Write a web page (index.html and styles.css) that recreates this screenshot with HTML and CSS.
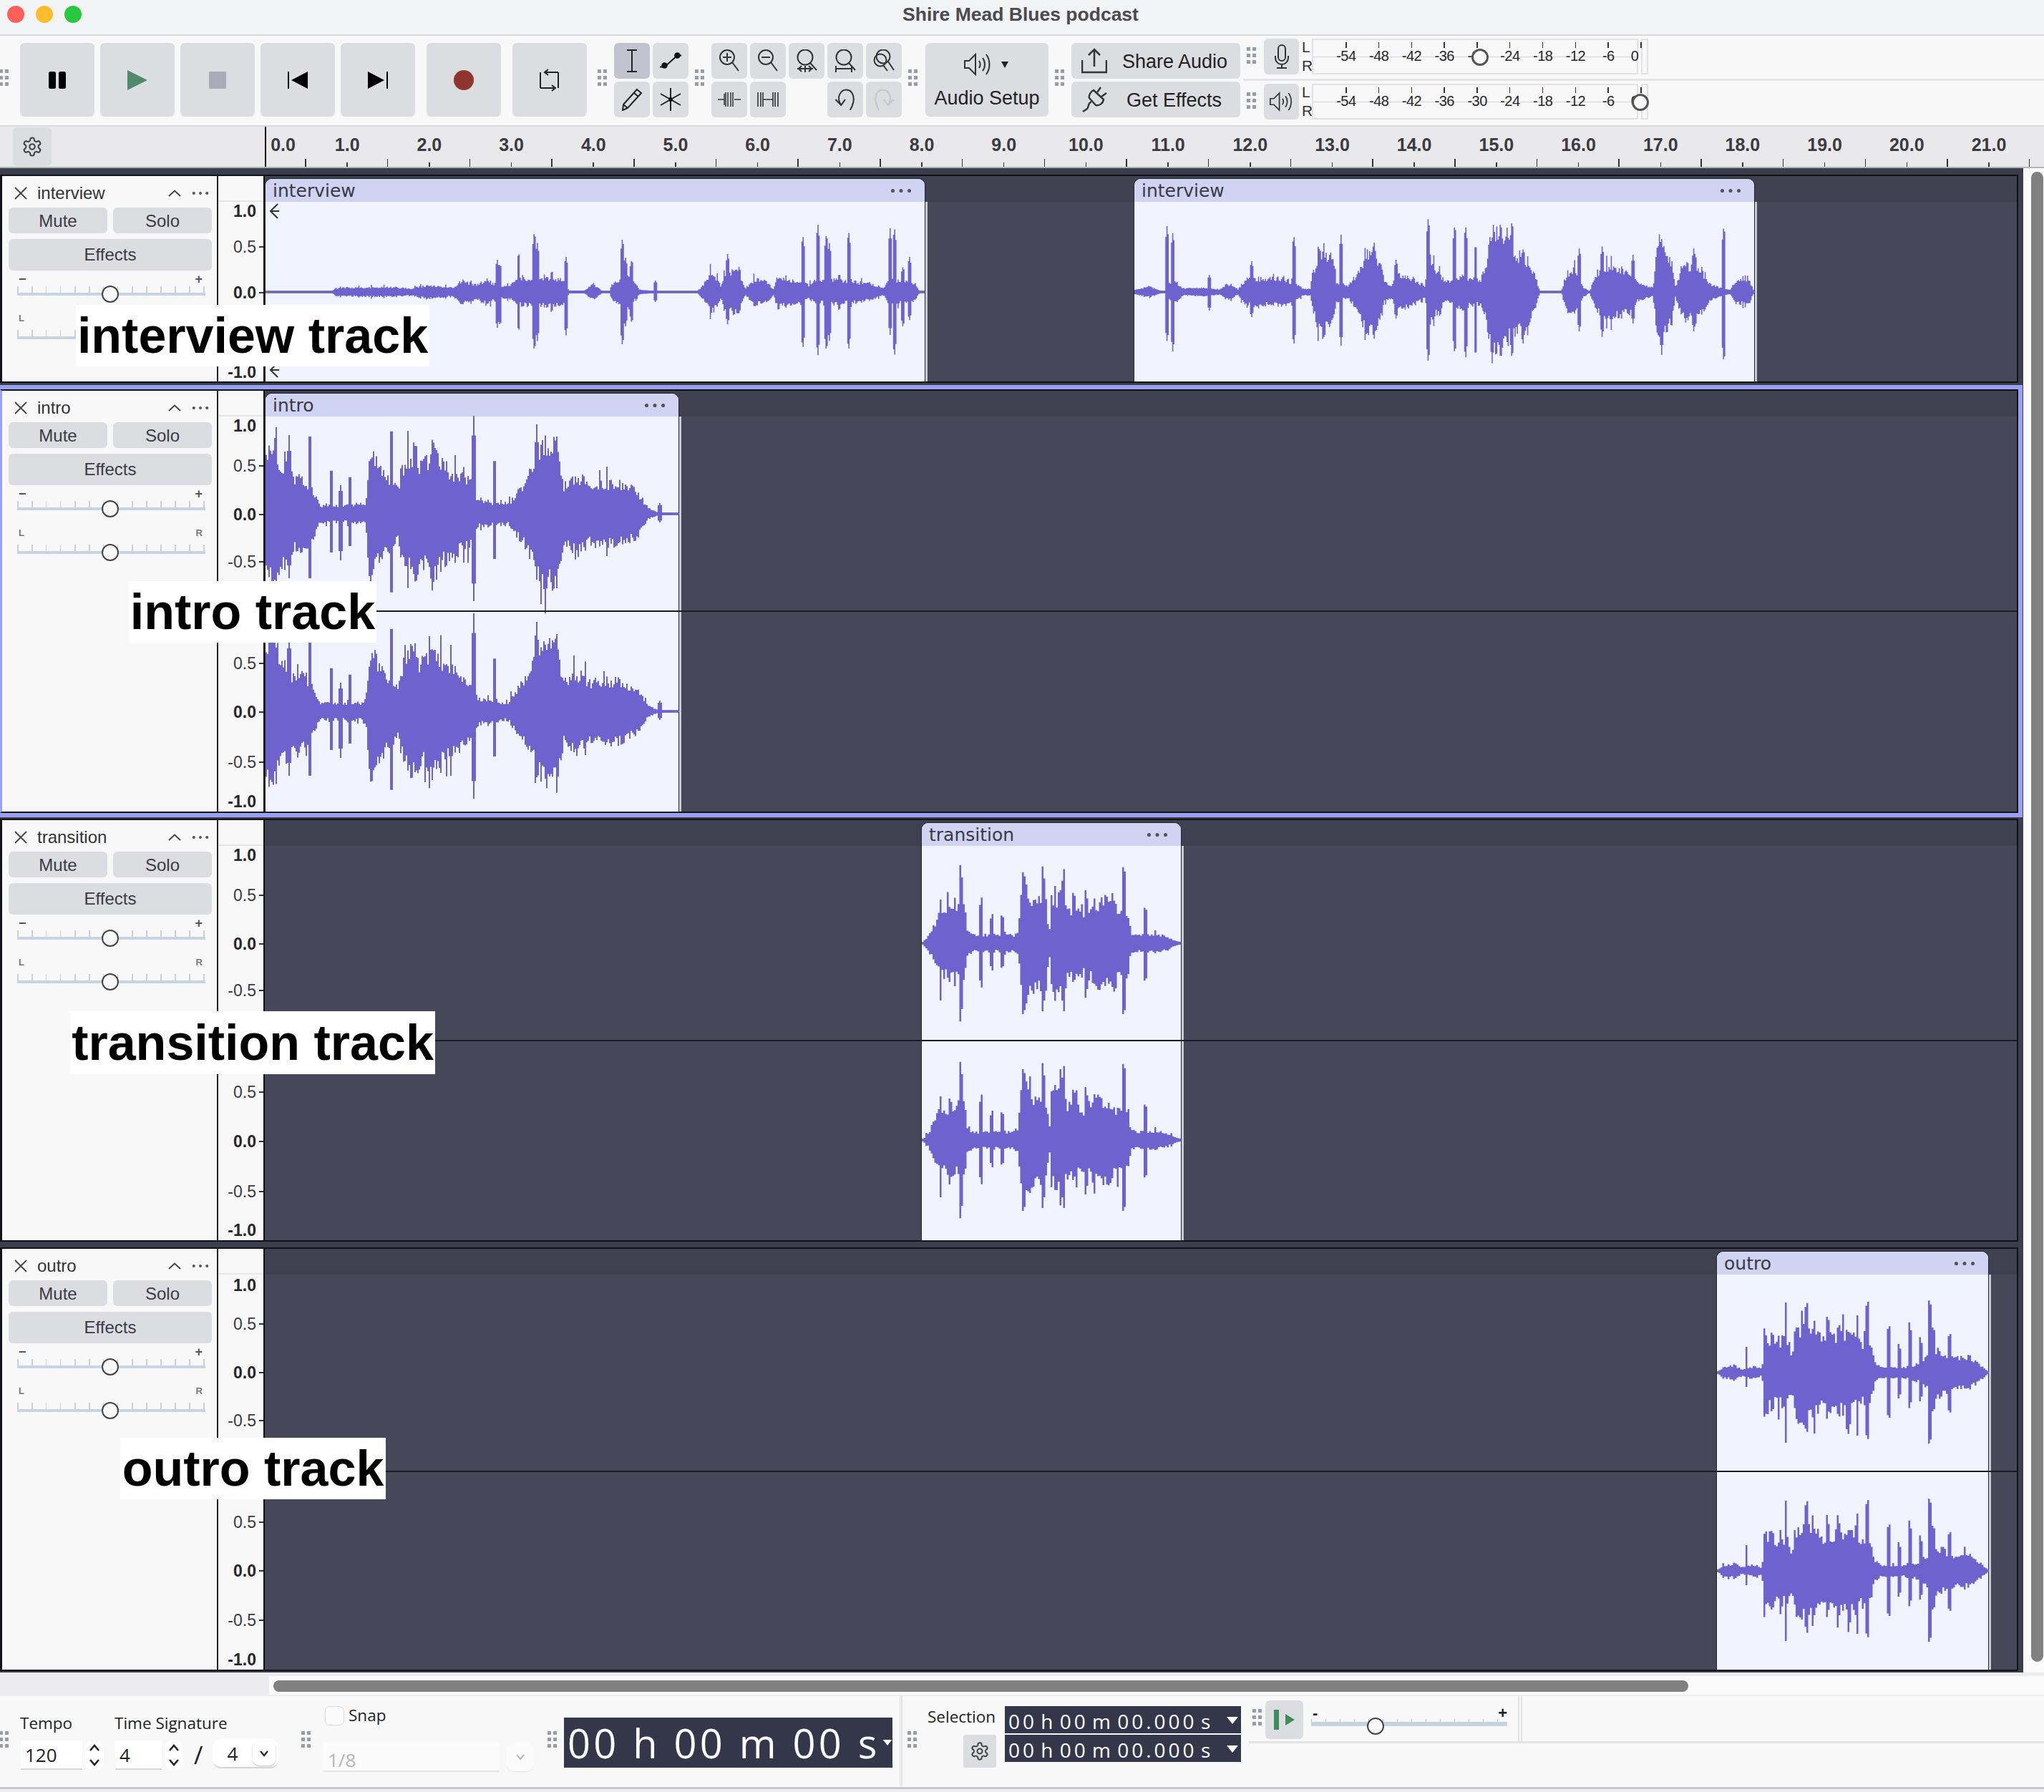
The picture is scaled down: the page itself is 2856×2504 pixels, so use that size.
FILE: index.html
```html
<!DOCTYPE html>
<html lang="en">
<head>
<meta charset="utf-8">
<title>Shire Mead Blues podcast</title>
<link rel="stylesheet" href="styles.css">
</head>
<body>
<svg class="defs" aria-hidden="true">
  <symbol id="i-grip" viewBox="0 0 13 24"><g fill="#9a9ba8"><rect width="5" height="5"/><rect x="8" width="5" height="5"/><rect y="9" width="5" height="5"/><rect x="8" y="9" width="5" height="5"/><rect y="18" width="5" height="5"/><rect x="8" y="18" width="5" height="5"/></g></symbol>
  <symbol id="i-x" viewBox="0 0 18 18"><path d="M1 1 17 17M17 1 1 17" fill="none" stroke="#444" stroke-width="1.800"/></symbol>
  <symbol id="i-chev" viewBox="0 0 18 10"><path d="M1 9 9 1.500 17 9" fill="none" stroke="#444" stroke-width="2"/></symbol>
  <symbol id="i-dots" viewBox="0 0 26 6"><g fill="#555"><circle cx="3" cy="3" r="2.200"/><circle cx="13" cy="3" r="2.200"/><circle cx="23" cy="3" r="2.200"/></g></symbol>
  <symbol id="i-back" viewBox="0 0 14 22"><path d="M12 1 2 11 12 21M2 11H14" fill="none" stroke="#333" stroke-width="2"/></symbol>
  <symbol id="i-gear" viewBox="0 0 24 24"><g fill="none" stroke="#444" stroke-width="1.700"><path d="M12.220 2h-.44a2 2 0 0 0-2 2v.18a2 2 0 0 1-1 1.730l-.43.25a2 2 0 0 1-2 0l-.15-.08a2 2 0 0 0-2.730.73l-.22.38a2 2 0 0 0 .73 2.730l.15.1a2 2 0 0 1 1 1.720v.51a2 2 0 0 1-1 1.740l-.15.09a2 2 0 0 0-.73 2.730l.22.38a2 2 0 0 0 2.730.73l.15-.08a2 2 0 0 1 2 0l.43.25a2 2 0 0 1 1 1.730V20a2 2 0 0 0 2 2h.44a2 2 0 0 0 2-2v-.18a2 2 0 0 1 1-1.730l.43-.25a2 2 0 0 1 2 0l.15.08a2 2 0 0 0 2.730-.73l.22-.39a2 2 0 0 0-.73-2.730l-.15-.08a2 2 0 0 1-1-1.740v-.5a2 2 0 0 1 1-1.740l.15-.09a2 2 0 0 0 .73-2.730l-.22-.38a2 2 0 0 0-2.730-.73l-.15.08a2 2 0 0 1-2 0l-.43-.25a2 2 0 0 1-1-1.730V4a2 2 0 0 0-2-2z"/><circle cx="12" cy="12" r="3"/></g></symbol>
  <symbol id="i-speaker" viewBox="0 0 40 32"><g fill="none" stroke="#333" stroke-width="2"><path d="M1 11H7L16 2V30L7 21H1Z"/><path d="M21 11C23 14 23 18 21 21M26 7C30 12 30 20 26 25M31 2C37 10 37 22 31 30"/></g></symbol>
  <symbol id="i-spin" viewBox="0 0 26 41"><g fill="none" stroke="#222" stroke-width="2.500"><path d="M7 14 13 7 19 14M7 27 13 34 19 27"/></g></symbol>
  <symbol id="i-caret" viewBox="0 0 18 12"><path d="M1 1H17L9 11Z" fill="#fff"/></symbol>
</svg>

<header class="titlebar">
  <div class="lights"><i class="light red"></i><i class="light yellow"></i><i class="light green"></i></div>
  <h1 class="doc-title">Shire Mead Blues podcast</h1>
</header>

<section class="toolbar">
  <svg class="grip grip-first"><use href="#i-grip"/></svg>
  <div class="transport">
    <button class="btn big"><svg class="ic24" viewBox="0 0 24 24"><rect x="0" width="10" height="24" rx="2.500"/><rect x="14" width="10" height="24" rx="2.500"/></svg></button>
    <button class="btn big"><svg class="ic28" viewBox="0 0 28 28"><path d="M0 0 28 14 0 28Z" fill="#4f8a6a"/></svg></button>
    <button class="btn big"><svg class="ic24" viewBox="0 0 24 24"><rect width="24" height="24" fill="#a9acb5"/></svg></button>
    <button class="btn big"><svg class="ic28" viewBox="0 0 28 24"><rect width="2" height="24"/><path d="M28 0V24L5 12Z"/></svg></button>
    <button class="btn big"><svg class="ic28" viewBox="0 0 28 24"><rect x="26" width="2" height="24"/><path d="M0 0V24L23 12Z"/></svg></button>
    <button class="btn big gap-l"><svg class="ic28" viewBox="0 0 28 28"><circle cx="14" cy="14" r="14" fill="#8e3530"/></svg></button>
    <button class="btn big gap-l"><svg class="ic-loop" viewBox="0 0 30 32"><g fill="none" stroke="#222" stroke-width="2"><path d="M2 27H21M2 5V27M27 5V27M8 5H27"/><path d="M13 1 8 5 13 9M18 23 23 27 18 31"/></g></svg></button>
  </div>
  <svg class="grip"><use href="#i-grip"/></svg>
  <div class="toolgrid two">
    <button class="btn tool active"><svg class="ic-tool" viewBox="0 0 20 32"><path d="M3 1H17M10 1V31M3 31H17" fill="none" stroke="#222" stroke-width="2"/></svg></button>
    <button class="btn tool"><svg class="ic-tool" viewBox="0 0 34 30"><g fill="#111"><circle cx="8" cy="22" r="4.500"/><circle cx="27" cy="7" r="4.500"/></g><path d="M1 24H8L27 7H33" fill="none" stroke="#111" stroke-width="2"/></svg></button>
    <button class="btn tool"><svg class="ic-tool" viewBox="0 0 30 32"><path d="M22 2 28 7 9 28 2 31 3 23ZM18 7 24 12M3 23 9 28" fill="none" stroke="#222" stroke-width="2"/></svg></button>
    <button class="btn tool"><svg class="ic-tool" viewBox="0 0 32 32"><path d="M16 0V32M2 8 30 24M30 8 2 24" fill="none" stroke="#222" stroke-width="2"/><circle cx="16" cy="16" r="3" fill="#111"/></svg></button>
  </div>
  <svg class="grip grip-small"><use href="#i-grip"/></svg>
  <div class="toolgrid five">
    <button class="btn tool"><svg class="ic-zoom" viewBox="0 0 30 32"><g fill="none" stroke="#333" stroke-width="2"><circle cx="12" cy="11" r="10"/><path d="M19 18 28 30M12 5V17M6 11H18"/></g></svg></button>
    <button class="btn tool"><svg class="ic-zoom" viewBox="0 0 30 32"><g fill="none" stroke="#333" stroke-width="2"><circle cx="12" cy="11" r="10"/><path d="M19 18 28 30M6 11H18"/></g></svg></button>
    <button class="btn tool"><svg class="ic-zoom" viewBox="0 0 30 32"><g fill="none" stroke="#333" stroke-width="2"><circle cx="13" cy="11" r="10.500"/><path d="M20 19 29 29M2 27H24M8 23 4 27 8 31M18 23 22 27 18 31M13 23V32"/></g></svg></button>
    <button class="btn tool"><svg class="ic-zoom" viewBox="0 0 30 32"><g fill="none" stroke="#333" stroke-width="2"><circle cx="13" cy="11" r="10.500"/><path d="M20 19 29 29M2 23V32M24 23V32M2 27H24"/></g></svg></button>
    <button class="btn tool"><svg class="ic-zoom" viewBox="0 0 30 32"><g fill="none" stroke="#333" stroke-width="2"><circle cx="14" cy="10" r="9.500"/><circle cx="10" cy="15" r="8.500"/><path d="M21 17 29 29M14 22 20 30"/></g></svg></button>
    <button class="btn tool"><svg class="ic-edit" viewBox="0 0 32 24"><path d="M0 12H9M23 12H32M11 2V22M14 2V22M18 2V22M21 2V22M9 4V20" fill="none" stroke="#333" stroke-width="1.500"/></svg></button>
    <button class="btn tool"><svg class="ic-edit" viewBox="0 0 32 24"><path d="M2 2V22M6 2V22M9 2V22M9 12H23M23 2V22M26 2V22M30 2V22" fill="none" stroke="#333" stroke-width="1.600"/></svg></button>
    <span class="tool-empty"></span>
    <button class="btn tool"><svg class="ic-undo" viewBox="0 0 30 30"><path d="M10 22C3 12 10 3 16 3 25 3 29 15 21 28M3 15 10 22 15 15" fill="none" stroke="#333" stroke-width="1.800"/></svg></button>
    <button class="btn tool"><svg class="ic-undo" viewBox="0 0 30 30"><path d="M20 22C27 12 20 3 14 3 5 3 1 15 9 28M27 15 20 22 15 15" fill="none" stroke="#c6c7ce" stroke-width="1.800"/></svg></button>
  </div>
  <svg class="grip grip-small"><use href="#i-grip"/></svg>
  <button class="btn audio-setup">
    <span class="audio-icons"><svg class="ic-speaker"><use href="#i-speaker"/></svg><svg class="ic-caret" viewBox="0 0 12 12"><path d="M1 2H11L6 11Z" fill="#222"/></svg></span>
    <span>Audio Setup</span>
  </button>
  <svg class="grip grip-small"><use href="#i-grip"/></svg>
  <div class="action-stack">
    <button class="btn action"><svg class="ic-share" viewBox="0 0 36 36"><path d="M1 17V34H35V17M18 26V2M10 10 18 2 26 10" fill="none" stroke="#333" stroke-width="2.500"/></svg><span class="action-text">Share Audio</span></button>
    <button class="btn action"><svg class="ic-share" viewBox="0 0 36 36"><g fill="none" stroke="#333" stroke-width="2.400"><path d="M17 5 31 18C30 24 25 27 20 26L11 16C10 12 13 7 17 5Z"/><path d="M22 8 27 1M28 14 35 9"/><path d="M14 21C8 24 11 28 8 31L2 35"/></g></svg><span class="action-text action-text-b">Get Effects</span></button>
  </div>
  <div class="meters">
    <div class="meter-row meter-row-top">
      <svg class="grip grip-meter"><use href="#i-grip"/></svg>
      <button class="btn meter-btn"><svg class="ic-mic" viewBox="0 0 24 34"><g fill="none" stroke="#333" stroke-width="2"><rect x="7" y="1" width="10" height="22" rx="5"/><path d="M3 16V19A9 9 0 0 0 21 19V16M12 28V33M5 33H19"/></g></svg></button>
      <div class="lr"><span>L</span><span>R</span></div>
      <div class="meter">
        <span class="m-cell">-54</span><span class="m-cell">-48</span><span class="m-cell">-42</span><span class="m-cell">-36</span><span class="m-cell">-30</span><span class="m-cell">-24</span><span class="m-cell">-18</span><span class="m-cell">-12</span><span class="m-cell">-6</span><span class="m-cell m-zero">0</span>
        <i class="knob" style="left:221px"></i>
      </div>
      <div class="meter-end"></div>
    </div>
    <div class="meter-row">
      <svg class="grip grip-meter"><use href="#i-grip"/></svg>
      <button class="btn meter-btn"><svg class="ic-spk-s"><use href="#i-speaker"/></svg></button>
      <div class="lr"><span>L</span><span>R</span></div>
      <div class="meter">
        <span class="m-cell">-54</span><span class="m-cell">-48</span><span class="m-cell">-42</span><span class="m-cell">-36</span><span class="m-cell">-30</span><span class="m-cell">-24</span><span class="m-cell">-18</span><span class="m-cell">-12</span><span class="m-cell">-6</span><span class="m-cell m-zero">0</span>
        <i class="knob" style="left:445px"></i>
      </div>
      <div class="meter-end"></div>
    </div>
  </div>
</section>

<section class="ruler">
  <button class="btn gear-btn"><svg class="ic-gear"><use href="#i-gear"/></svg></button>
  <div class="ruler-scale">
    <span class="r-cell r-first">0.0</span><span class="r-cell">1.0</span><span class="r-cell">2.0</span><span class="r-cell">3.0</span><span class="r-cell">4.0</span><span class="r-cell">5.0</span><span class="r-cell">6.0</span><span class="r-cell">7.0</span><span class="r-cell">8.0</span><span class="r-cell">9.0</span><span class="r-cell">10.0</span><span class="r-cell">11.0</span><span class="r-cell">12.0</span><span class="r-cell">13.0</span><span class="r-cell">14.0</span><span class="r-cell">15.0</span><span class="r-cell">16.0</span><span class="r-cell">17.0</span><span class="r-cell">18.0</span><span class="r-cell">19.0</span><span class="r-cell">20.0</span><span class="r-cell">21.0</span>
  </div>
</section>

<main class="workspace">
  <div class="tracks">

    <article class="track track-mono">
      <div class="panel">
        <div class="panel-head"><svg class="ic-x"><use href="#i-x"/></svg><span class="track-name">interview</span><svg class="ic-chev"><use href="#i-chev"/></svg><svg class="ic-dots"><use href="#i-dots"/></svg></div>
        <div class="ms-row"><button class="btn ms">Mute</button><button class="btn ms">Solo</button></div>
        <button class="btn fx">Effects</button>
        <div class="slider"><div class="slider-labels"><span>−</span><span>+</span></div><div class="slider-scale"><i class="thumb"></i></div></div>
        <div class="slider slider-pan"><div class="slider-labels"><span>L</span></div><div class="slider-scale"></div></div>
      </div>
      <div class="vruler">
        <span class="v-label strong" style="top:49px">1.0</span>
        <span class="v-label tick" style="top:99px">0.5</span>
        <span class="v-label strong tick" style="top:163px">0.0</span>
        <span class="v-label strong" style="top:274px">-1.0</span>
      </div>
      <div class="canvas">
        <div class="clip" style="left:1px;width:921px">
          <div class="clip-head"><span>interview</span><svg class="ic-clipdots"><use href="#i-dots"/></svg></div>
          <svg class="wave" data-wave="t1a" data-centers="126"></svg>
          <svg class="back back-top"><use href="#i-back"/></svg>
          <svg class="back back-bottom"><use href="#i-back"/></svg>
        </div>
        <div class="clip" style="left:1215px;width:866px">
          <div class="clip-head"><span>interview</span><svg class="ic-clipdots"><use href="#i-dots"/></svg></div>
          <svg class="wave" data-wave="t1b" data-centers="126"></svg>
        </div>
      </div>
      <div class="label label-interview">interview track</div>
    </article>

    <article class="track track-stereo track-selected">
      <div class="panel">
        <div class="panel-head"><svg class="ic-x"><use href="#i-x"/></svg><span class="track-name">intro</span><svg class="ic-chev"><use href="#i-chev"/></svg><svg class="ic-dots"><use href="#i-dots"/></svg></div>
        <div class="ms-row"><button class="btn ms">Mute</button><button class="btn ms">Solo</button></div>
        <button class="btn fx">Effects</button>
        <div class="slider"><div class="slider-labels"><span>−</span><span>+</span></div><div class="slider-scale"><i class="thumb"></i></div></div>
        <div class="slider slider-pan"><div class="slider-labels"><span>L</span><span>R</span></div><div class="slider-scale"><i class="thumb"></i></div></div>
      </div>
      <div class="vruler">
        <span class="v-label strong" style="top:49px">1.0</span>
        <span class="v-label tick" style="top:105px">0.5</span>
        <span class="v-label strong tick" style="top:173px">0.0</span>
        <span class="v-label tick" style="top:239px">-0.5</span>
        <span class="v-label tick" style="top:381px">0.5</span>
        <span class="v-label strong tick" style="top:449px">0.0</span>
        <span class="v-label tick" style="top:519px">-0.5</span>
        <span class="v-label strong" style="top:574px">-1.0</span>
      </div>
      <div class="canvas">
        <div class="clip" style="left:1px;width:577px">
          <div class="clip-head"><span>intro</span><svg class="ic-clipdots"><use href="#i-dots"/></svg></div>
          <svg class="wave" data-wave="t2" data-centers="136,412"></svg>
        </div>
      </div>
      <div class="divider"></div>
      <div class="label label-intro">intro track</div>
    </article>

    <article class="track track-stereo track-short">
      <div class="panel">
        <div class="panel-head"><svg class="ic-x"><use href="#i-x"/></svg><span class="track-name">transition</span><svg class="ic-chev"><use href="#i-chev"/></svg><svg class="ic-dots"><use href="#i-dots"/></svg></div>
        <div class="ms-row"><button class="btn ms">Mute</button><button class="btn ms">Solo</button></div>
        <button class="btn fx">Effects</button>
        <div class="slider"><div class="slider-labels"><span>−</span><span>+</span></div><div class="slider-scale"><i class="thumb"></i></div></div>
        <div class="slider slider-pan"><div class="slider-labels"><span>L</span><span>R</span></div><div class="slider-scale"><i class="thumb"></i></div></div>
      </div>
      <div class="vruler">
        <span class="v-label strong" style="top:49px">1.0</span>
        <span class="v-label tick" style="top:105px">0.5</span>
        <span class="v-label strong tick" style="top:173px">0.0</span>
        <span class="v-label tick" style="top:238px">-0.5</span>
        <span class="v-label tick" style="top:380px">0.5</span>
        <span class="v-label strong tick" style="top:449px">0.0</span>
        <span class="v-label tick" style="top:519px">-0.5</span>
        <span class="v-label strong" style="top:573px">-1.0</span>
      </div>
      <div class="canvas">
        <div class="clip" style="left:918px;width:362px">
          <div class="clip-head"><span>transition</span><svg class="ic-clipdots"><use href="#i-dots"/></svg></div>
          <svg class="wave" data-wave="t3" data-centers="136,411"></svg>
        </div>
      </div>
      <div class="divider"></div>
      <div class="label label-transition">transition track</div>
    </article>

    <article class="track track-stereo track-outro">
      <div class="panel">
        <div class="panel-head"><svg class="ic-x"><use href="#i-x"/></svg><span class="track-name">outro</span><svg class="ic-chev"><use href="#i-chev"/></svg><svg class="ic-dots"><use href="#i-dots"/></svg></div>
        <div class="ms-row"><button class="btn ms">Mute</button><button class="btn ms">Solo</button></div>
        <button class="btn fx">Effects</button>
        <div class="slider"><div class="slider-labels"><span>−</span><span>+</span></div><div class="slider-scale"><i class="thumb"></i></div></div>
        <div class="slider slider-pan"><div class="slider-labels"><span>L</span><span>R</span></div><div class="slider-scale"><i class="thumb"></i></div></div>
      </div>
      <div class="vruler">
        <span class="v-label strong" style="top:51px">1.0</span>
        <span class="v-label tick" style="top:105px">0.5</span>
        <span class="v-label strong tick" style="top:173px">0.0</span>
        <span class="v-label tick" style="top:240px">-0.5</span>
        <span class="v-label tick" style="top:382px">0.5</span>
        <span class="v-label strong tick" style="top:450px">0.0</span>
        <span class="v-label tick" style="top:519px">-0.5</span>
        <span class="v-label strong" style="top:574px">-1.0</span>
      </div>
      <div class="canvas">
        <div class="clip" style="left:2029px;width:379px">
          <div class="clip-head"><span>outro</span><svg class="ic-clipdots"><use href="#i-dots"/></svg></div>
          <svg class="wave" data-wave="t4" data-centers="137,414"></svg>
        </div>
      </div>
      <div class="divider"></div>
      <div class="label label-outro">outro track</div>
    </article>

  </div>
  <div class="vscroll"><div class="vthumb"></div></div>
</main>

<div class="hscroll"><div class="htrack"><div class="hthumb"></div></div></div>

<footer class="footer">
  <svg class="grip f-grip f-grip-first"><use href="#i-grip"/></svg>
  <div class="f-tempo">
    <div class="f-labels"><span class="f-label f-label-tempo">Tempo</span><span class="f-label">Time Signature</span></div>
    <div class="f-inputs">
      <span class="num num-wide">120</span><svg class="spin"><use href="#i-spin"/></svg>
      <span class="num num-narrow">4</span><svg class="spin"><use href="#i-spin"/></svg>
      <span class="slash">/</span>
      <span class="denom"><span class="denom-val">4</span><span class="denom-btn"><svg class="denom-chev" viewBox="0 0 14 10"><path d="M2 2 7 8 12 2" fill="none" stroke="#222" stroke-width="2.200"/></svg></span></span>
    </div>
  </div>
  <svg class="grip f-grip"><use href="#i-grip"/></svg>
  <div class="f-snap">
    <div class="snap-row"><span class="checkbox"></span><span class="f-label snap-label">Snap</span></div>
    <div class="snap-select"><span class="snap-val">1/8</span><span class="snap-btn"><svg class="denom-chev" viewBox="0 0 14 10"><path d="M2 2 7 8 12 2" fill="none" stroke="#b5b5ba" stroke-width="2"/></svg></span></div>
  </div>
  <svg class="grip f-grip f-grip-time"><use href="#i-grip"/></svg>
  <div class="time-big"><span>00 h 00 m 00 s</span><svg class="time-caret"><use href="#i-caret"/></svg></div>
  <div class="f-divider"></div>
  <svg class="grip f-grip f-grip-sel"><use href="#i-grip"/></svg>
  <div class="f-selection">
    <div class="sel-side"><span class="f-label sel-label">Selection</span><button class="btn sel-gear"><svg class="ic-gear ic-gear-s"><use href="#i-gear"/></svg></button></div>
    <div class="sel-times">
      <div class="time-small"><span>00 h 00 m 00.000 s</span><svg class="time-caret-s"><use href="#i-caret"/></svg></div>
      <div class="time-small"><span>00 h 00 m 00.000 s</span><svg class="time-caret-s"><use href="#i-caret"/></svg></div>
    </div>
  </div>
  <div class="f-right">
    <div class="speed">
      <svg class="grip f-grip-speed"><use href="#i-grip"/></svg>
      <button class="btn speed-btn"><svg class="ic-speed" viewBox="0 0 30 30"><rect x="0" y="1" width="7" height="28" fill="#3f8a5f"/><path d="M16 7 29 15 16 23Z" fill="#3f8a5f"/></svg></button>
      <div class="speed-slider"><div class="slider-labels speed-labels"><span>-</span><span>+</span></div><div class="slider-scale speed-scale"><i class="thumb speed-thumb"></i></div></div>
      <div class="speed-end"></div>
    </div>
  </div>
</footer>
<script src="script.js"></script>
</body>
</html>
```

FILE: styles.css
```css
* { box-sizing: border-box; }
html, body { margin: 0; padding: 0; }
body {
  width: 2856px;
  height: 2504px;
  overflow: hidden;
  display: flex;
  flex-direction: column;
  background: #f0f0f1;
  font-family: "Liberation Sans", Arial, sans-serif;
  color: #33343c;
}
.defs { position: absolute; width: 0; height: 0; }
button { font: inherit; color: inherit; border: 0; padding: 0; }
svg { display: block; }

.titlebar {
  height: 50px;
  flex: none;
  background: #f2f3f5;
  border-bottom: 2px solid #d8d9dc;
  display: flex;
  align-items: center;
  justify-content: center;
  position: relative;
}
.lights { position: absolute; left: 10px; top: 8px; display: flex; gap: 16px; }
.light { width: 24px; height: 24px; border-radius: 50%; display: block; }
.red { background: #ff6058; }
.yellow { background: #ffbd2e; }
.green { background: #28c940; }
.doc-title { margin: 0 4px 8px 0; font-size: 26.500px; font-weight: 700; color: #4a4a4f; }

.btn { background: #dcdde1; border-radius: 6px; display: flex; align-items: center; justify-content: center; }

.toolbar {
  height: 127px;
  flex: none;
  background: #f8f8f9;
  border-bottom: 2px solid #dcdcdf;
  display: flex;
  align-items: flex-start;
  padding-top: 10px;
}
.grip { width: 13px; height: 24px; flex: none; margin-top: 37px; }
.grip-first { margin-left: -1px; }
.transport { display: flex; gap: 8px; margin: 0 15px 0 16px; }
.big { width: 104px; height: 103px; }
.gap-l { margin-left: 8px; }
.ic24 { width: 24px; height: 24px; }
.ic28 { width: 28px; height: 28px; }
.ic-loop { width: 30px; height: 32px; }
.toolgrid { display: grid; grid-auto-rows: 50px; gap: 4px; margin-left: 10px; }
.two { grid-template-columns: 50px 50px; }
.five { grid-template-columns: repeat(5, 50px); margin-left: 10px; }
.grip-small { margin-left: 9px; }
.tool { width: 50px; height: 50px; }
.active { background: #c2c3cf; }
.ic-tool { width: 32px; height: 32px; }
.ic-zoom { width: 30px; height: 32px; }
.ic-edit { width: 32px; height: 24px; }
.ic-undo { width: 34px; height: 34px; }
.audio-setup {
  width: 172px;
  height: 103px;
  margin-left: 11px;
  flex-direction: column;
  font-size: 27px;
  line-height: 30px;
  color: #222;
  gap: 16px;
  padding-top: 3px;
}
.audio-icons { display: flex; align-items: center; gap: 11px; padding-right: 2px; }
.ic-speaker { width: 40px; height: 32px; }
.ic-caret { width: 12px; height: 12px; }
.action-stack { display: flex; flex-direction: column; gap: 4px; margin-left: 10px; }
.action { width: 236px; height: 50px; justify-content: flex-start; padding-left: 14px; font-size: 27px; color: #222; }
.ic-share { width: 36px; height: 36px; flex: none; }
.action-text { margin-left: 21px; padding-top: 3px; }
.action-text-b { margin-left: 27px; }

.meters { flex: 1; margin-top: -10px; margin-left: 4px; display: flex; flex-direction: column; height: 125px; }
.meter-row { height: 62px; padding-top: 4px; display: flex; align-items: flex-start; }
.meter-row-top { height: 63px; border-bottom: 3px solid #e4e4ea; }
.grip-meter { margin: 12px 0 0 5px; }
.meter-btn { width: 49px; height: 50px; margin-left: 11px; flex: none; }
.ic-mic { width: 24px; height: 34px; }
.ic-spk-s { width: 34px; height: 30px; }
.lr { width: 14px; height: 50px; margin-left: 4px; display: flex; flex-direction: column; justify-content: space-between; font-size: 21px; color: #333; line-height: 24px; }
.meter {
  width: 456px;
  height: 50px;
  border: 2px solid #e2e2e5;
  background: linear-gradient(#d5d5d8, #d5d5d8) 0 23px / 100% 1px no-repeat;
  position: relative;
  display: flex;
  padding-left: 23px;
  flex: none;
}
.m-cell {
  width: 45.800px;
  flex: none;
  font-size: 20px;
  color: #26262c;
  text-align: center;
  line-height: 22px;
  padding-top: 11px;
  letter-spacing: -0.500px;
  position: relative;
}
.m-cell::before { content: ""; position: absolute; left: 22px; top: 3px; width: 1.500px; height: 8px; background: #333; }
.m-zero { transform: translateX(-9px); }
.m-zero::before { left: 31px; }
.knob { position: absolute; top: 12px; width: 24px; height: 24px; border-radius: 50%; border: 3px solid #555; background: #f8f8f9; z-index: 1; }
.meter-end { width: 10px; height: 50px; margin-left: 4px; border: 2px solid #e2e2e5; flex: none; }

.ruler {
  height: 58px;
  flex: none;
  background: #e9e9eb;
  border-bottom: 2px solid #b4b4b8;
  display: flex;
  position: relative;
}
.gear-btn { position: absolute; left: 18px; top: 1px; width: 54px; height: 54px; }
.ic-gear { width: 30px; height: 30px; }
.ruler-scale {
  display: flex;
  margin-left: 313.200px;
  position: relative;
  width: 2544px;
  height: 56px;
  background-image:
    repeating-linear-gradient(90deg, transparent 0 56.600px, #333 56.600px 58.100px, transparent 58.100px 114.700px),
    repeating-linear-gradient(90deg, transparent 0 113.200px, #333 113.200px 114.700px);
  background-size: 100% 6px, 100% 11px;
  background-position: 0 100%, 0 100%;
  background-repeat: no-repeat;
}
.ruler-scale::before { content: ""; position: absolute; left: 56.500px; top: 0; bottom: 0; width: 2px; background: #111; }
.r-cell {
  width: 114.700px;
  flex: none;
  text-align: center;
  font-size: 25px;
  font-weight: 700;
  color: #3a3a40;
  line-height: 50px;
}
.r-first { padding-left: 50px; }

.workspace { height: 2102px; flex: none; display: flex; background: #3c3d4b; }
.tracks { width: 2827px; flex: none; padding: 9px 7px 0 0; display: flex; flex-direction: column; gap: 8px; background: #3c3d4b; }
.track {
  display: flex;
  position: relative;
  border-style: solid;
  border-color: #111118;
  border-width: 2px 2px 2px 3px;
  flex: none;
}
.track-mono { height: 291px; margin-bottom: 1px; }
.track-stereo { height: 592px; }
.track-short { height: 591px; }
.track-selected { outline: 6px solid #9aa0f0; border-left-color: #9aa0f0; }
.panel {
  width: 302px;
  flex: none;
  background: #f8f8f9;
  border-right: 2px solid #222;
  padding: 0 7px 0 9px;
}
.panel-head { height: 44px; display: flex; align-items: center; padding: 3px 0 0 8px; }
.ic-x { width: 18px; height: 18px; flex: none; }
.track-name { font-size: 24px; margin-left: 14px; flex: 1; color: #333; line-height: 44px; }
.ic-chev { width: 18px; height: 10px; margin-right: 15px; }
.ic-dots { width: 24px; height: 6px; margin-right: 4px; }
.ms-row { display: flex; gap: 8px; }
.ms { flex: 1; height: 36px; font-size: 24px; color: #3a3b45; padding-top: 2px; }
.fx { width: 100%; height: 44px; margin-top: 8px; font-size: 24px; color: #3a3b45; }
.slider { margin: 4px 9px 0 12px; }
.slider-pan { margin-top: 24px; }
.slider-labels { height: 16px; display: flex; justify-content: space-between; font-size: 18px; font-weight: 700; color: #555; line-height: 16px; padding: 0 4px 0 2px; }
.slider-pan .slider-labels { font-size: 13px; color: #777; }
.slider-scale {
  height: 13px;
  margin-top: 2px;
  position: relative;
  background:
    linear-gradient(#c8d4e2, #c8d4e2) 0 100% / 100% 4px no-repeat,
    repeating-linear-gradient(90deg, #c8d0da 0 1.500px, transparent 1.500px 20px);
}
.slider-pan .slider-scale { margin-top: 8px; }
.thumb {
  position: absolute;
  left: 49.400%;
  bottom: -10px;
  width: 24px;
  height: 24px;
  margin-left: -12px;
  border-radius: 50%;
  border: 2px solid #444;
  background: #f8f8f9;
}

.vruler { width: 65px; flex: none; position: relative; background: #f8f8f9; border-right: 2px solid #111; }
.vruler::before { content: ""; position: absolute; left: 0; right: 0; top: 34px; height: 2px; background: #e6e6ea; }
.v-label { position: absolute; right: 10px; transform: translateY(-50%); font-size: 23px; color: #3a3a42; line-height: 26px; }
.strong { font-weight: 700; color: #26262c; }
.tick::after { content: ""; position: absolute; right: -10px; top: 12px; width: 6px; height: 2px; background: #333; }

.canvas { flex: 1; position: relative; background: linear-gradient(#3f4050, #3f4050) 0 0 / 100% 36px no-repeat, #464759; }
.clip { position: absolute; top: 4px; bottom: 0; background: #f1f3fe; border-radius: 9px 9px 0 0; box-shadow: 0 0 0 1px #26262f; }
.clip::after { content: ""; position: absolute; top: 32px; bottom: 0; right: -4px; width: 3px; background: #c9cad4; }
.clip-head {
  height: 32px;
  background: #d0d3f1;
  border-radius: 9px 9px 0 0;
  display: flex;
  align-items: center;
  justify-content: space-between;
  padding: 1px 18px 0 10px;
  font-family: "DejaVu Sans", sans-serif;
  font-size: 25px;
  color: #3a3a44;
}
.ic-clipdots { width: 30px; height: 7px; }
.wave { position: absolute; left: 0; top: 32px; width: 100%; height: calc(100% - 32px); overflow: visible; }
.back { position: absolute; left: 5px; width: 14px; height: 22px; }
.back-top { top: 34px; }
.back-bottom { top: 256px; }
.divider { position: absolute; left: 302px; right: 0; top: 307px; height: 2px; background: #1c1c24; }
.track-outro .divider { top: 310px; }

.label {
  position: absolute;
  background: #fff;
  color: #000;
  font-weight: 700;
  font-size: 70px;
  line-height: 86px;
  height: 86px;
  text-align: center;
  white-space: nowrap;
}
.label-interview { left: 103px; top: 180px; width: 494px; }
.label-intro { left: 177px; top: 266px; width: 346px; }
.label-transition { left: 95px; top: 267px; width: 510px; height: 88px; line-height: 88px; }
.label-outro { left: 165px; top: 264px; width: 371px; }

.vscroll { flex: 1; background: #fbfbfc; padding: 5px 1px 0 11px; }
.vthumb { height: 2082px; border-radius: 9px; background: #808080; }

.hscroll { height: 31px; flex: none; background: #ececee; padding: 5px 0 0 376px; }
.htrack { height: 26px; background: #fbfbfc; padding: 6px 0 0 6px; }
.hthumb { width: 1977px; height: 16px; border-radius: 8px; background: #808080; }

.footer {
  height: 132px;
  flex: none;
  background: #f8f8f9;
  border-top: 2px solid #eeeeef;
  border-bottom: 3px solid #c9c9cb;
  display: flex;
  align-items: flex-start;
  font-family: "Open Sans", sans-serif;
  color: #222;
  position: relative;
}
.f-grip { margin-top: 49px; margin-left: 15px; }
.f-grip-first { margin-left: -1px; }
.f-grip-time { margin-left: 19px; }
.f-tempo { width: 378px; margin: 25px 0 0 16px; }
.f-labels { display: flex; height: 37px; }
.f-label { font-size: 22.500px; line-height: 26px; }
.f-label-tempo { width: 132px; }
.f-inputs { display: flex; align-items: flex-start; }
.num { height: 41px; background: #fff; border-bottom: 2px solid #d6d6d8; font-size: 26px; line-height: 40px; padding-left: 6px; flex: none; }
.num-wide { width: 86px; margin-left: 1px; }
.num-narrow { width: 65px; margin-left: 16px; }
.spin { width: 26px; height: 41px; margin-left: 4px; background: #fff; border-radius: 10px; flex: none; }
.slash { font-size: 34px; line-height: 40px; margin-left: 15px; width: 26px; }
.denom { width: 92px; height: 41px; background: #fff; border-radius: 12px; border-bottom: 2px solid #d6d6d8; display: flex; align-items: center; margin-top: -2px; }
.denom-val { font-size: 26px; width: 56px; text-align: center; }
.denom-btn { width: 32px; height: 34px; border-radius: 9px; background: #fff; box-shadow: 0 1px 2px #bbb; display: flex; align-items: center; justify-content: center; }
.denom-chev { width: 14px; height: 10px; }
.f-snap { width: 295px; margin: 14px 0 0 17px; }
.snap-row { display: flex; align-items: flex-start; padding-left: 3px; height: 51px; }
.checkbox { width: 27px; height: 27px; border: 1.500px solid #d9d9dc; border-radius: 7px; background: #fbfbfc; }
.snap-label { margin: 0 0 0 6px; }
.snap-select { display: flex; align-items: flex-start; gap: 10px; }
.snap-val { width: 247px; height: 41px; background: #fbfbfc; border-bottom: 2px solid #e4e4e6; color: #b5b5ba; font-size: 26px; line-height: 48px; padding-left: 7px; overflow: hidden; }
.snap-btn { width: 38px; height: 41px; background: #fbfbfc; border-radius: 10px; border-bottom: 1px solid #e4e4e6; display: flex; align-items: center; justify-content: center; }
.time-big {
  width: 459px;
  height: 70px;
  margin: 30px 0 0 10px;
  background: #34364a;
  color: #fff;
  font-size: 56px;
  line-height: 66px;
  letter-spacing: 4.200px;
  white-space: nowrap;
  padding-left: 5px;
  display: flex;
  align-items: center;
  position: relative;
}
.time-caret { position: absolute; right: 0; top: 30px; width: 14px; height: 10px; }
.f-divider { width: 4px; height: 126px; margin-left: 10px; border-right: 2px solid #e2e2e4; border-left: 1px solid #e2e2e4; flex: none; }
.f-grip-sel { margin-left: 7px; }
.f-selection { display: flex; margin: 14px 0 0 15px; width: 438px; }
.sel-side { width: 108px; display: flex; flex-direction: column; align-items: flex-end; padding-right: 12px; }
.sel-label { margin-top: 2px; width: 96px; }
.sel-gear { width: 46px; height: 46px; margin-top: 12px; border-radius: 3px; }
.ic-gear-s { width: 28px; height: 28px; }
.sel-times { display: flex; flex-direction: column; gap: 2px; width: 330px; }
.time-small {
  height: 38px;
  background: #34364a;
  color: #fff;
  font-size: 28px;
  letter-spacing: 4px;
  word-spacing: -6px;
  line-height: 38px;
  padding: 2px 0 0 5px;
  white-space: nowrap;
  position: relative;
}
.time-caret-s { position: absolute; right: 3px; top: 14px; width: 18px; height: 12px; }
.f-right { flex: 1; margin-left: 11px; height: 66px; border-bottom: 3px solid #e2e2e4; }
.speed { display: flex; padding-left: 5px; }
.f-grip-speed { margin-top: 18px; }
.speed-btn { width: 53px; height: 54px; margin: 6px 0 0 5px; }
.ic-speed { width: 30px; height: 30px; }
.speed-slider { width: 274px; margin: 16px 0 0 11px; }
.speed-labels { padding: 0 0 0 2px; font-size: 22px; color: #222; font-family: "Liberation Sans", sans-serif; }
.speed-scale { height: 10px; margin-top: 0; background: linear-gradient(#c5d2e0, #c5d2e0) 0 100% / 100% 6px no-repeat, repeating-linear-gradient(90deg, #b4bfcc 0 1px, transparent 1px 20px); }
.speed-thumb { left: 33%; bottom: -12px; }
.speed-end { width: 6px; height: 63px; margin-left: 15px; border-left: 2px solid #e2e2e4; border-right: 2px solid #e2e2e4; }
```

FILE: script.js
```js
(function () {
  var W = {
    t1a: { w: 921, step: 1.6,
      env: [[0,1],[92,1],[98,6],[178,7],[202,5],[225,10],[261,6],[273,16],[297,10],[308,18],[320,10],[340,9],[356,20],[380,18],[395,20],[415,18],[424,2],[445,2],[457,12],[470,1],[480,1],[483,10],[504,26],[522,3],[552,1],[602,1],[611,10],[623,30],[636,8],[640,28],[658,30],[670,4],[682,18],[697,16],[709,5],[715,23],[759,10],[765,15],[795,18],[842,12],[863,5],[872,20],[907,12],[913,1],[921,1]],
      spikes: [[323,46,51],[327,40,48],[353,56,56],[375,86,84],[379,70,70],[419,50,62],[498,76,76],[502,50,50],[511,46,44],[544,16,14],[645,54,46],[661,36,30],[750,80,80],[771,96,90],[783,83,84],[787,70,70],[814,86,82],[872,89,60],[878,91,91],[890,36,50],[899,50,40]] },
    t1b: { w: 866, step: 1.6,
      env: [[0,3],[20,8],[35,2],[43,1],[51,18],[68,5],[96,6],[118,4],[130,12],[144,4],[152,15],[163,20],[175,18],[208,20],[217,15],[236,5],[245,5],[248,25],[259,58],[276,50],[281,15],[298,8],[309,25],[326,60],[343,45],[349,13],[360,10],[365,25],[388,20],[405,8],[413,50],[422,30],[433,15],[444,15],[452,22],[483,18],[489,30],[500,94],[528,60],[551,45],[562,15],[566,1],[596,1],[601,20],[612,35],[623,10],[635,1],[646,28],[663,38],[691,30],[702,13],[724,6],[730,68],[750,45],[755,8],[767,40],[792,30],[803,12],[820,5],[831,3],[842,18],[859,15],[865,1]],
      spikes: [[45,94,70],[53,84,85],[104,24,26],[163,44,36],[222,80,75],[263,60,70],[288,80,75],[334,72,68],[365,46,38],[410,106,100],[447,96,88],[462,94,95],[476,68,92],[511,100,95],[520,90,70],[527,102,95],[542,62,75],[621,62,56],[653,65,64],[696,52,44],[736,74,88],[781,62,56],[823,94,100]] },
    t2: { w: 577, step: 2,
      env: [[0,88],[10,107],[18,82],[37,53],[53,53],[68,29],[75,12],[139,12],[145,98],[158,67],[184,37],[190,65],[206,90],[216,69],[235,90],[247,69],[267,57],[286,45],[297,18],[337,12],[362,47],[385,94],[406,102],[416,41],[432,57],[452,43],[490,45],[518,33],[534,8],[547,2],[577,1]],
      spikes: [[32,110,90],[61,120,100],[91,67,60],[104,40,65],[117,57,50],[175,128,122],[208,95,85],[290,137,122],[319,82,70],[378,125,92],[406,108,92],[550,15,12]] },
    t3: { w: 362, step: 2.5,
      env: [[0,1],[9,12],[17,29],[24,47],[46,49],[59,49],[62,22],[69,12],[132,12],[137,53],[144,92],[147,67],[162,63],[172,65],[177,14],[181,63],[196,69],[202,53],[219,47],[229,45],[239,57],[256,61],[272,45],[287,45],[291,16],[299,12],[316,12],[330,12],[342,10],[352,4],[362,1]],
      spikes: [[25,61,80],[53,115,115],[82,67,65],[97,43,40],[111,43,38],[141,110,110],[168,113,100],[197,109,100],[211,78,60],[228,78,80],[281,118,110],[311,55,58],[325,18,14]] },
    t4: { w: 379, step: 2.5,
      env: [[0,1],[8,8],[24,10],[34,5],[51,9],[61,5],[64,26],[65,60],[78,42],[91,48],[101,40],[104,18],[107,60],[114,65],[138,60],[148,48],[178,58],[198,45],[214,40],[219,15],[228,8],[258,7],[278,12],[291,22],[306,35],[324,25],[331,20],[351,24],[368,10],[378,1]],
      spikes: [[23,12,12],[40,36,20],[76,62,60],[95,98,98],[124,108,92],[153,82,68],[169,74,68],[183,60,90],[195,80,88],[209,110,103],[239,72,70],[253,42,38],[268,74,52],[283,52,42],[296,112,110],[301,70,60],[324,60,62]] }
  };

  function rng(seed) {
    return function () {
      seed = (seed + 0x6D2B79F5) | 0;
      var t = Math.imul(seed ^ (seed >>> 15), 1 | seed);
      t = (t + Math.imul(t ^ (t >>> 7), 61 | t)) ^ t;
      return ((t ^ (t >>> 14)) >>> 0) / 4294967296;
    };
  }

  function amp(env, x) {
    for (var i = 1; i < env.length; i++) {
      if (x <= env[i][0]) {
        var a = env[i - 1], b = env[i];
        return a[1] + (b[1] - a[1]) * (x - a[0]) / (b[0] - a[0]);
      }
    }
    return env[env.length - 1][1];
  }

  function channel(d, c, seed) {
    var r = rng(seed), out = '';
    for (var x = 0; x < d.w; x += d.step) {
      var base = amp(d.env, x);
      var j = base < 4 ? 1 : 0.74 + 0.38 * r();
      var j2 = base < 4 ? 1 : 0.74 + 0.38 * r();
      var top = base * j, bot = base * j2;
      if (base >= 6 && r() < 0.09) { top *= 1.35; bot *= 1.3; }
      for (var i = 0; i < d.spikes.length; i++) {
        var s = d.spikes[i], dx = Math.abs(x - s[0]);
        if (dx <= 2.2) {
          var f = 1 - dx * 0.1;
          top = Math.max(top, s[1] * f);
          bot = Math.max(bot, s[2] * f);
        }
      }
      out += 'M' + x.toFixed(1) + ' ' + (c - top).toFixed(1) + 'h' + d.step + 'V' + (c + bot).toFixed(1) + 'h-' + d.step + 'z';
    }
    return out;
  }

  var NS = 'http://www.w3.org/2000/svg';
  document.querySelectorAll('svg.wave').forEach(function (svg, n) {
    var d = W[svg.getAttribute('data-wave')];
    svg.getAttribute('data-centers').split(',').forEach(function (cs, k) {
      var c = Number(cs);
      var line = document.createElementNS(NS, 'rect');
      line.setAttribute('x', 0);
      line.setAttribute('y', c - 1.5);
      line.setAttribute('width', d.w);
      line.setAttribute('height', 3);
      line.setAttribute('fill', '#16161c');
      svg.appendChild(line);
      var p = document.createElementNS(NS, 'path');
      p.setAttribute('fill', '#6e62cf');
      p.setAttribute('d', channel(d, c, 1000 + n * 37 + k * 211));
      svg.appendChild(p);
    });
  });
})();
```
